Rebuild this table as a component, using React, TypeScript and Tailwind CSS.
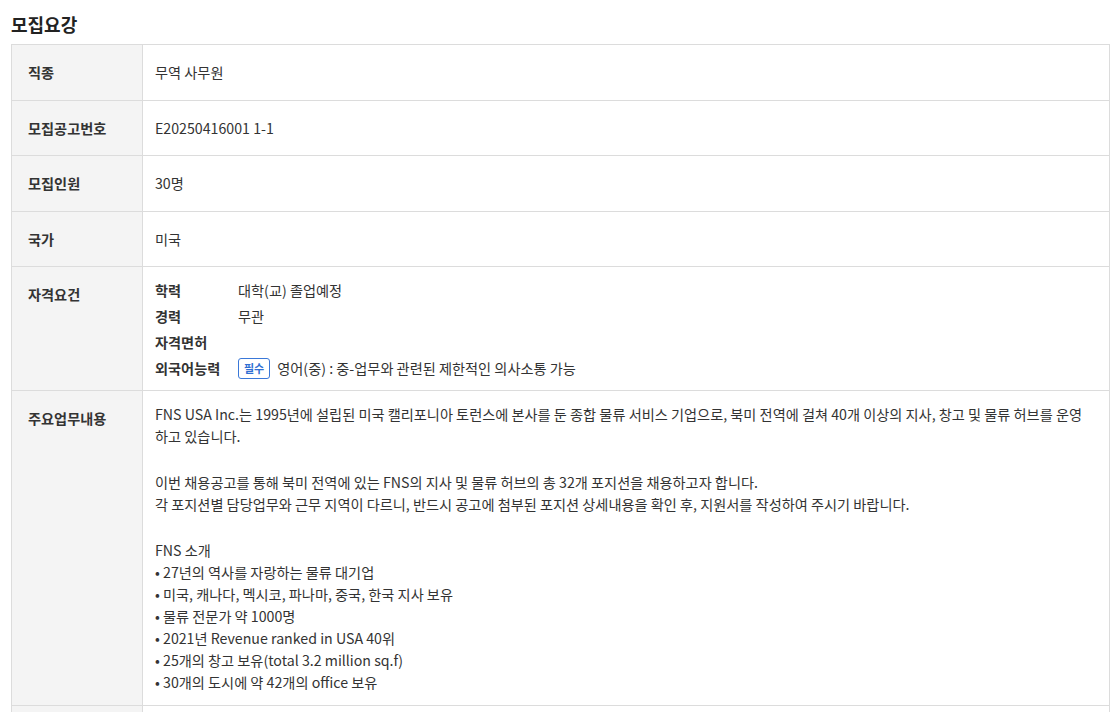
const font = "font-['Noto_Sans_CJK_KR','Noto_Sans',sans-serif]";

type Row = { label: string; content: React.ReactNode; valueClass?: string };

function Badge({ children }: { children: React.ReactNode }) {
  return (
    <span className="mr-[7px] inline-flex h-[21px] items-center rounded-[3px] border border-[#3a78d8] px-[5px] text-[11px] font-semibold leading-none text-[#2f6fd3]">
      {children}
    </span>
  );
}

function Qualifications() {
  const items: { k: string; v: React.ReactNode }[] = [
    { k: "학력", v: "대학(교) 졸업예정" },
    { k: "경력", v: "무관" },
    { k: "자격면허", v: "" },
    {
      k: "외국어능력",
      v: (
        <>
          <Badge>필수</Badge>영어(중) : 중-업무와 관련된 제한적인 의사소통 가능
        </>
      ),
    },
  ];
  return (
    <div className="flex flex-col">
      {items.map((it) => (
        <div key={it.k} className="flex h-[26px] items-center">
          <span className="w-[83px] shrink-0 font-bold text-[#333]">{it.k}</span>
          <span className="flex items-center">{it.v}</span>
        </div>
      ))}
    </div>
  );
}

function Duties() {
  const intro = [
    "• 27년의 역사를 자랑하는 물류 대기업",
    "• 미국, 캐나다, 멕시코, 파나마, 중국, 한국 지사 보유",
    "• 물류 전문가 약 1000명",
    "• 2021년 Revenue ranked in USA 40위",
    "• 25개의 창고 보유(total 3.2 million sq.f)",
    "• 30개의 도시에 약 42개의 office 보유",
  ];
  return (
    <div className="leading-[22px]">
      <p>
        FNS USA Inc.는 1995년에 설립된 미국 캘리포니아 토런스에 본사를 둔 종합 물류 서비스 기업으로, 북미 전역에 걸쳐 40개 이상의 지사, 창고 및 물류 허브를 운영
        <br />
        하고 있습니다.
      </p>
      <p className="mt-[24px]">
        이번 채용공고를 통해 북미 전역에 있는 FNS의 지사 및 물류 허브의 총 32개 포지션을 채용하고자 합니다.
        <br />
        각 포지션별 담당업무와 근무 지역이 다르니, 반드시 공고에 첨부된 포지션 상세내용을 확인 후, 지원서를 작성하여 주시기 바랍니다.
      </p>
      <div className="mt-[24px]">
        <p>FNS 소개</p>
        {intro.map((l) => (
          <p key={l}>{l}</p>
        ))}
      </div>
    </div>
  );
}

export default function App() {
  const rows: Row[] = [
    { label: "직종", content: "무역 사무원" },
    { label: "모집공고번호", content: "E20250416001 1-1" },
    { label: "모집인원", content: "30명" },
    { label: "국가", content: "미국" },
    { label: "자격요건", content: <Qualifications />, valueClass: "pt-[10px] pb-[9px]" },
    { label: "주요업무내용", content: <Duties />, valueClass: "pt-[12px] pb-[12px]" },
  ];

  return (
    <div className={`min-h-screen bg-white pl-[11px] pr-[9px] text-[14.2px] text-[#333] ${font}`}>
      <h2 className="pt-[12px] pb-[8px] text-[18px] font-bold leading-[24px] text-[#222]">모집요강</h2>
      <div className="border-t border-l border-r border-[#dcdcdc]">
        {rows.map((r) => (
          <div key={r.label} className="flex border-b border-[#dcdcdc]">
            <div className="w-[131px] shrink-0 border-r border-[#dcdcdc] bg-[#f4f4f4] px-[16px] pt-[17px] pb-[17.5px] leading-[20px] font-bold text-[#333]">
              {r.label}
            </div>
            <div className={`flex-1 px-[12px] leading-[20px] ${r.valueClass ?? "pt-[17px] pb-[17.5px]"}`}>{r.content}</div>
          </div>
        ))}
        <div className="flex h-[40px]">
          <div className="w-[131px] shrink-0 border-r border-[#dcdcdc] bg-[#f4f4f4]" />
          <div className="flex-1" />
        </div>
      </div>
    </div>
  );
}
